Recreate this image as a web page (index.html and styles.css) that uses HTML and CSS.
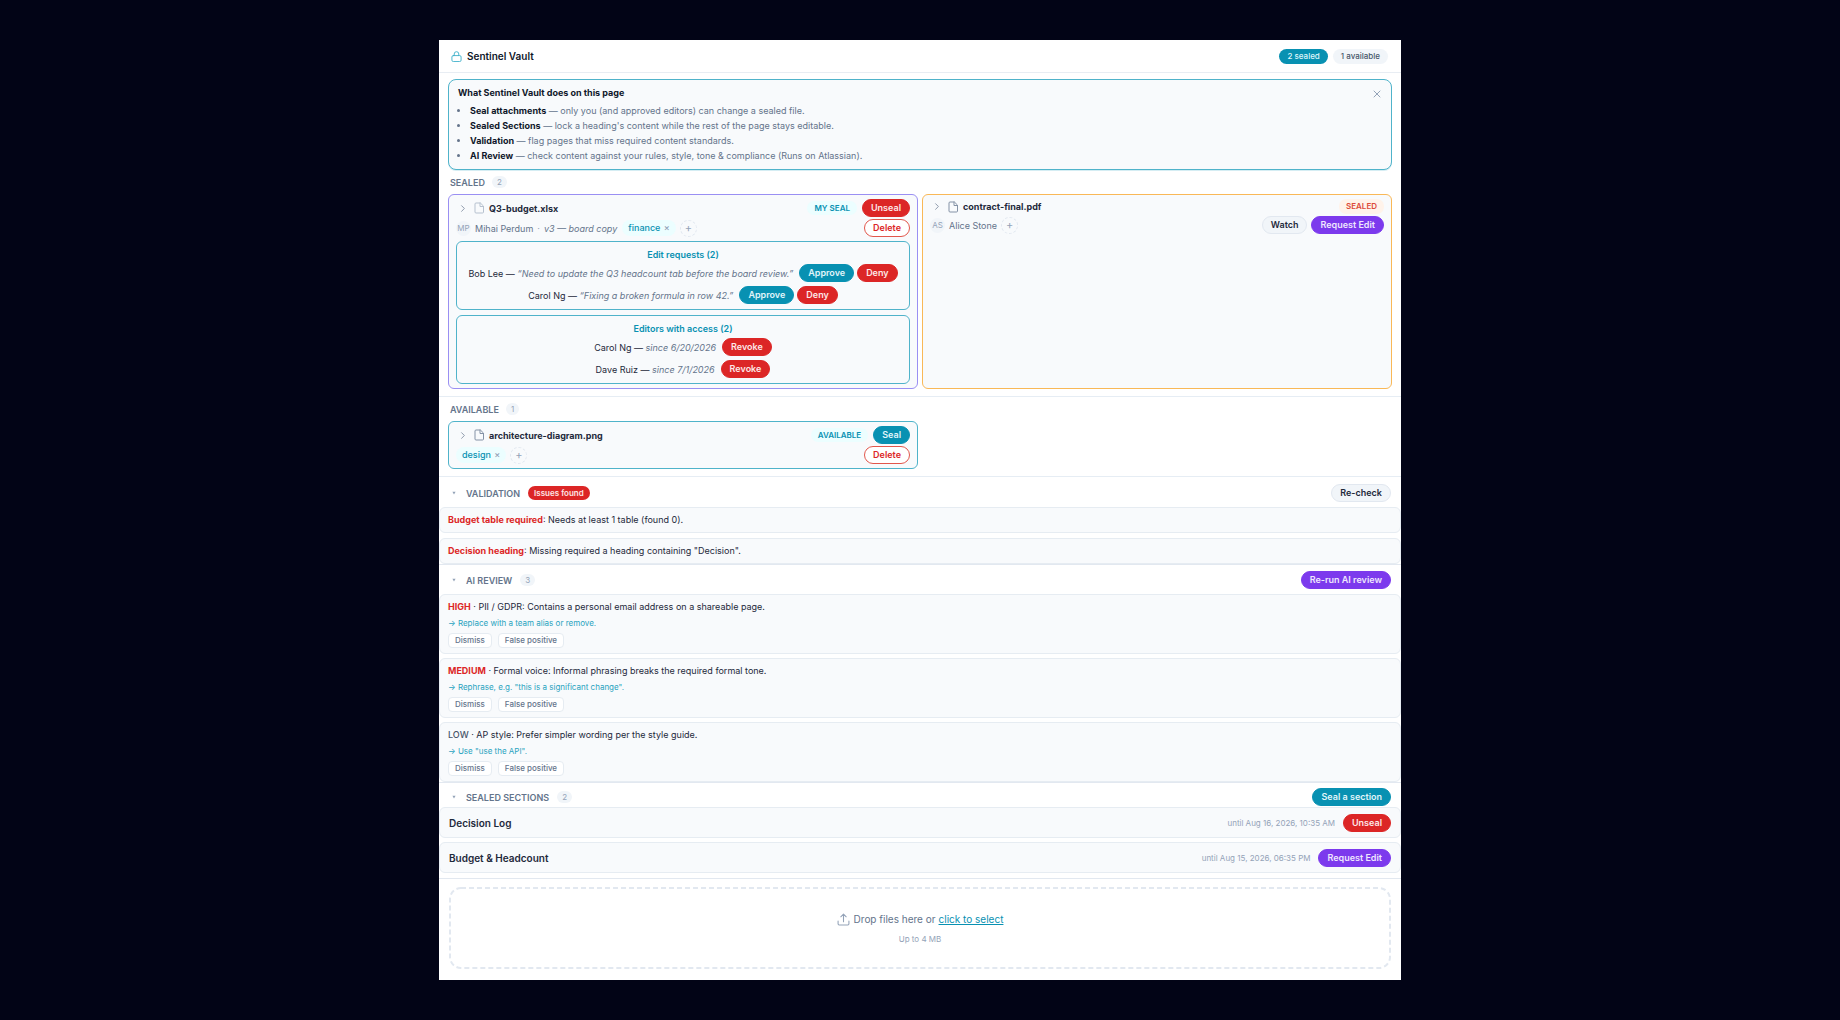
FILE: index.html
```html
<!DOCTYPE html>
<html lang="en">
<head>
<meta charset="utf-8">
<meta name="viewport" content="width=device-width, initial-scale=1">
<title>Sentinel Vault</title>
<link rel="stylesheet" href="styles.css">
</head>
<body>
<svg class="sprite" aria-hidden="true">
  <symbol id="i-file" viewBox="0 0 24 24"><path d="M14 2H6a2 2 0 0 0-2 2v16a2 2 0 0 0 2 2h13a2 2 0 0 0 2-2V9z M14 2v7h7"/></symbol>
  <symbol id="i-chevron" viewBox="0 0 10 10"><path d="M3 1l4 4-4 4"/></symbol>
  <symbol id="i-caret" viewBox="0 0 10 10"><path d="M1 2h8L5 9z"/></symbol>
</svg>
<main class="panel">
  <header class="topbar">
    <svg class="lock" viewBox="0 0 24 24" aria-hidden="true"><rect x="2" y="10" width="20" height="13" rx="3"/><path d="M7 10V6.500a5 5 0 0 1 10 0V10"/></svg>
    <h1 class="brand">Sentinel Vault</h1>
    <span class="stat stat-sealed">2 sealed</span>
    <span class="stat">1 available</span>
  </header>

  <section class="intro">
    <div class="intro-body">
      <h2 class="intro-title">What Sentinel Vault does on this page</h2>
      <ul class="intro-list">
        <li><strong>Seal attachments</strong> — only you (and approved editors) can change a sealed file.</li>
        <li><strong>Sealed Sections</strong> — lock a heading's content while the rest of the page stays editable.</li>
        <li><strong>Validation</strong> — flag pages that miss required content standards.</li>
        <li><strong>AI Review</strong> — check content against your rules, style, tone &amp; compliance (Runs on Atlassian).</li>
      </ul>
    </div>
    <button class="close" aria-label="Close"><svg viewBox="0 0 10 10" aria-hidden="true"><path d="M2 2l6 6M8 2l-6 6"/></svg></button>
  </section>

  <section class="files">
    <div class="group-head"><h2 class="label">Sealed</h2><span class="count">2</span></div>
    <div class="cards">
      <article class="card card-mine">
        <div class="row">
          <button class="expand" aria-label="Expand"><svg class="chevron"><use href="#i-chevron"/></svg></button>
          <svg class="file file-light"><use href="#i-file"/></svg>
          <h3 class="name">Q3-budget.xlsx</h3>
          <span class="badge">My seal</span>
          <button class="btn red">Unseal</button>
        </div>
        <div class="row">
          <span class="avatar">MP</span><span class="owner">Mihai Perdum</span><span class="dot">·</span><em class="note">v3 — board copy</em>
          <span class="tag">finance <button class="untag" aria-label="Remove finance">×</button></span>
          <button class="add" aria-label="Add tag">+</button>
          <button class="btn outline push">Delete</button>
        </div>
        <div class="box box-first">
          <h4 class="box-title">Edit requests (2)</h4>
          <div class="person"><p>Bob Lee — <em>“Need to update the Q3 headcount tab before the board review.”</em></p><button class="btn teal">Approve</button><button class="btn red">Deny</button></div>
          <div class="person"><p>Carol Ng — <em>“Fixing a broken formula in row 42.”</em></p><button class="btn teal">Approve</button><button class="btn red">Deny</button></div>
        </div>
        <div class="box">
          <h4 class="box-title">Editors with access (2)</h4>
          <div class="person"><p>Carol Ng — <em>since 6/20/2026</em></p><button class="btn red">Revoke</button></div>
          <div class="person"><p>Dave Ruiz — <em>since 7/1/2026</em></p><button class="btn red">Revoke</button></div>
        </div>
      </article>
      <article class="card card-locked">
        <div class="row">
          <button class="expand" aria-label="Expand"><svg class="chevron"><use href="#i-chevron"/></svg></button>
          <svg class="file"><use href="#i-file"/></svg>
          <h3 class="name">contract-final.pdf</h3>
          <span class="badge badge-sealed">Sealed</span>
        </div>
        <div class="row">
          <span class="avatar">AS</span><span class="owner">Alice Stone</span>
          <button class="add" aria-label="Add tag">+</button>
          <button class="btn grey push">Watch</button>
          <button class="btn purple">Request Edit</button>
        </div>
      </article>
    </div>
  </section>

  <section class="files">
    <div class="group-head"><h2 class="label">Available</h2><span class="count">1</span></div>
    <div class="cards">
      <article class="card card-open">
        <div class="row">
          <button class="expand" aria-label="Expand"><svg class="chevron"><use href="#i-chevron"/></svg></button>
          <svg class="file"><use href="#i-file"/></svg>
          <h3 class="name">architecture-diagram.png</h3>
          <span class="badge">Available</span>
          <button class="btn teal">Seal</button>
        </div>
        <div class="row">
          <span class="tag">design <button class="untag" aria-label="Remove design">×</button></span>
          <button class="add" aria-label="Add tag">+</button>
          <button class="btn outline push">Delete</button>
        </div>
      </article>
    </div>
  </section>

  <section class="checks">
    <div class="check-head">
      <button class="toggle" aria-label="Collapse validation"><svg><use href="#i-caret"/></svg></button>
      <h2 class="label">Validation</h2><span class="issues">Issues found</span>
      <button class="btn grey push">Re-check</button>
    </div>
    <div class="items items-rules">
      <p class="item"><strong class="alert">Budget table required</strong>: Needs at least 1 table (found 0).</p>
      <p class="item"><strong class="alert">Decision heading</strong>: Missing required a heading containing "Decision".</p>
    </div>
  </section>

  <section class="checks">
    <div class="check-head">
      <button class="toggle" aria-label="Collapse AI review"><svg><use href="#i-caret"/></svg></button>
      <h2 class="label">AI Review</h2><span class="count">3</span>
      <button class="btn purple push">Re-run AI review</button>
    </div>
    <div class="items">
      <article class="item finding">
        <p><strong class="alert">HIGH</strong> · PII / GDPR: Contains a personal email address on a shareable page.</p>
        <p class="hint">→ Replace with a team alias or remove.</p>
        <div class="choices"><button class="mini">Dismiss</button><button class="mini">False positive</button></div>
      </article>
      <article class="item finding">
        <p><strong class="alert">MEDIUM</strong> · Formal voice: Informal phrasing breaks the required formal tone.</p>
        <p class="hint">→ Rephrase, e.g. "this is a significant change".</p>
        <div class="choices"><button class="mini">Dismiss</button><button class="mini">False positive</button></div>
      </article>
      <article class="item finding">
        <p><span class="low">LOW</span> · AP style: Prefer simpler wording per the style guide.</p>
        <p class="hint">→ Use "use the API".</p>
        <div class="choices"><button class="mini">Dismiss</button><button class="mini">False positive</button></div>
      </article>
    </div>
  </section>

  <section class="checks checks-sections">
    <div class="check-head">
      <button class="toggle" aria-label="Collapse sealed sections"><svg><use href="#i-caret"/></svg></button>
      <h2 class="label">Sealed Sections</h2><span class="count">2</span>
      <button class="btn teal push">Seal a section</button>
    </div>
    <div class="items">
      <div class="item sealed"><h3 class="sealed-name">Decision Log</h3><span class="until">until Aug 16, 2026, 10:35 AM</span><button class="btn red">Unseal</button></div>
      <div class="item sealed"><h3 class="sealed-name">Budget &amp; Headcount</h3><span class="until">until Aug 15, 2026, 06:35 PM</span><button class="btn purple">Request Edit</button></div>
    </div>
  </section>

  <section class="upload">
    <div class="dropzone">
      <svg class="dashes" aria-hidden="true"><rect x="1" y="1" rx="11"/></svg>
      <p class="drop-line"><svg class="tray" viewBox="0 0 24 24" aria-hidden="true"><path d="M2 15v5a2 2 0 0 0 2 2h16a2 2 0 0 0 2-2v-5M12 16V2M7 7l5-5 5 5"/></svg>Drop files here or <a class="pick" href="#">click to select</a></p>
      <p class="limit">Up to 4 MB</p>
    </div>
  </section>
</main>
</body>
</html>
```
FILE: styles.css
```css
* { box-sizing: border-box; }
body {
  margin: 0;
  padding: 40px 16px;
  background: #020416;
  color: #1e293b;
  font: 9px/13px Inter, "Liberation Sans", sans-serif;
}
h1, h2, h3, h4, p, ul { margin: 0; padding: 0; }
button { font: inherit; color: inherit; margin: 0; padding: 0; border: 0; background: none; cursor: pointer; }
.sprite { display: none; }
svg { fill: none; stroke: currentColor; stroke-width: 2; stroke-linecap: round; stroke-linejoin: round; flex: none; }

.panel { max-width: 962px; margin: 0 auto; background: #fff; }

.topbar {
  display: flex; align-items: center; gap: 5px;
  height: 33px; padding: 0 13px 0 12px;
  border-bottom: 1px solid #e8edf3;
}
.lock { width: 11px; height: 11px; color: #3fb1cb; }
.brand { flex: 1; font-size: 10px; font-weight: 600; color: #0f172a; }
.stat { padding: 0 8px; border-radius: 8px; background: #f1f5f9; color: #475569; font-size: 8px; font-weight: 500; line-height: 15px; }
.stat-sealed { background: #0891b2; color: #dff6fb; }

.intro {
  display: flex;
  margin: 6px 9px 0; padding: 6px 9px;
  border: 1px solid #4fb3ca; border-radius: 8px;
  background: #f8fafc;
  box-shadow: 0 1px 0 #d5edf3;
}
.intro-body { flex: 1; }
.intro-title { margin-bottom: 4px; font-size: 9px; line-height: 13px; font-weight: 700; color: #0f172a; }
.intro-list { padding-left: 12px; line-height: 15px; color: #64748b; }
.intro-list strong { font-weight: 700; color: #0f172a; }
.close { align-self: flex-start; margin-top: 3px; color: #94a3b8; }
.close svg { display: block; width: 10px; height: 10px; stroke-width: 1; }

.files { padding: 0 9px 7px; border-bottom: 1px solid #e6edf4; }
.group-head { display: flex; align-items: center; gap: 7px; height: 24px; padding-left: 2px; }
.label { font-size: 9px; font-weight: 600; text-transform: uppercase; color: #64748b; }
.count { padding: 0 5px; border-radius: 6px; background: #f1f5f9; color: #94a3b8; font-size: 8px; line-height: 12px; }

.cards { display: grid; grid-template-columns: 1fr 1fr; gap: 4px; }
.card { padding: 4px 7px; border: 1px solid; border-radius: 6px; background: #f8fafc; }
.card-mine { border-color: #9a8ff3; }
.card-locked { border-color: #f9b857; }
.card-open { border-color: #4fb3ca; }
.row { display: flex; align-items: center; }
.row + .row { margin-top: 2px; }
.expand { display: flex; margin-left: 3px; color: #64748b; }
.chevron { width: 8px; height: 7px; stroke-width: 1; }
.file { width: 12px; height: 12px; margin: 0 4px 0 6px; color: #8492a6; }
.file-light { color: #b6c1cf; }
.name { flex: 1; font-size: 9px; font-weight: 700; color: #1e293b; }
.badge {
  padding: 0 7px; border-radius: 7px; background: #ecfeff; color: #0891b2;
  font-size: 8px; line-height: 14px; font-weight: 600; text-transform: uppercase;
}
.badge + .btn { margin-left: 5px; }
.badge-sealed { background: #fff3ea; color: #dc4a3a; line-height: 15px; }
.avatar {
  width: 15px; height: 15px; border-radius: 50%; margin-right: 4px;
  background: #f1f5f9; color: #94a3b8; font-size: 8px; line-height: 15px; text-align: center;
}
.owner { color: #64748b; }
.dot { margin: 0 4px; color: #94a3b8; }
.note { color: #64748b; margin-right: 5px; }
.tag { padding: 0 6px; border-radius: 8px; background: #ecfeff; color: #0891b2; font-weight: 500; line-height: 16px; }
.untag { margin-left: 1px; color: #94a3b8; }
.add {
  width: 17px; height: 17px; margin-left: 4px; border: 1px dashed #e2e8f0; border-radius: 50%;
  color: #94a3b8; font-size: 11px; line-height: 15px; text-align: center;
}
.btn {
  height: 18px; padding: 0 8px; border: 1px solid transparent; border-radius: 9px;
  font-size: 9px; line-height: 16px; font-weight: 600; white-space: nowrap;
}
.btn + .btn { margin-left: 4px; }
.push { margin-left: auto; }
.red { background: #dc2626; border-color: #dc2626; color: #fde8e8; }
.teal { background: #0891b2; border-color: #0891b2; color: #e0f5fa; }
.purple { background: #7c3aed; border-color: #7c3aed; color: #efe7fe; }
.grey { background: #f1f5f9; border-color: #e2e8f0; color: #1e293b; }
.outline { background: #fff; border-color: #e2574c; color: #dc2626; }

.box { margin-top: 5px; padding: 6px 7px 5px; border: 1px solid #4fb3ca; border-radius: 6px; }
.box-first { margin-top: 4px; }
.box-title { margin-bottom: 3px; font-size: 9px; font-weight: 600; color: #0891b2; text-align: center; }
.person { display: flex; align-items: center; justify-content: center; }
.person + .person { margin-top: 4px; }
.person p { margin-right: 6px; }
.person em { color: #64748b; }
.person .btn + .btn { margin-left: 3px; }

.check-head { display: flex; align-items: center; padding: 6px 10px 5px 13px; }
.checks + .checks { border-top: 1px solid #e2e8f0; }
.files + .checks .check-head { padding-top: 7px; }
.checks-sections .check-head { padding-top: 5px; padding-bottom: 1px; }
.toggle { display: flex; margin-right: 10px; color: #94a3b8; }
.toggle svg { width: 4px; height: 4px; fill: currentColor; stroke: none; }
.check-head .count, .issues { margin-left: 8px; }
.issues { padding: 0 6px; border-radius: 7px; background: #dc2626; color: #fde8e8; font-size: 8px; line-height: 14px; font-weight: 600; }
.items { display: grid; gap: 4px; }
.items-rules { gap: 5px; }
.item { padding: 5px 8px 6px; border: 1px solid #e6ecf2; border-radius: 6px; background: #f8fafc; }
.alert { font-weight: 700; color: #dc2626; }
.low { font-weight: 500; color: #475569; }
.finding { padding-bottom: 5px; }
.hint { margin: 4px 0 3px; font-size: 8px; color: #29a3c0; }
.choices { display: flex; gap: 6px; }
.mini { height: 15px; padding: 0 6px; border: 1px solid #e6ecf2; border-radius: 4px; background: #fff; color: #64748b; font-size: 8px; line-height: 13px; font-weight: 500; }
.sealed { display: flex; align-items: center; padding: 6px 9px 5px; }
.sealed-name { flex: 1; font-size: 10px; font-weight: 600; }
.until { margin-right: 8px; font-size: 8px; color: #94a3b8; }

.upload { margin-top: 5px; padding: 8px 10px 11px; border-top: 1px solid #e2e8f0; }
.dropzone { position: relative; padding: 26px 0 23px; text-align: center; }
.dashes { position: absolute; inset: 0; width: 100%; height: 100%; color: #e2e8f0; }
.dashes rect { width: calc(100% - 2px); height: calc(100% - 2px); stroke-width: 2; stroke-dasharray: 5 3; stroke-linecap: butt; }
.drop-line { position: relative; display: flex; align-items: center; justify-content: center; font-size: 10px; color: #64748b; }
.tray { width: 13px; height: 13px; margin-right: 4px; color: #94a3b8; }
.pick { margin-left: 3px; color: #0891b2; }
.limit { margin-top: 7px; font-size: 8px; color: #94a3b8; }
```
